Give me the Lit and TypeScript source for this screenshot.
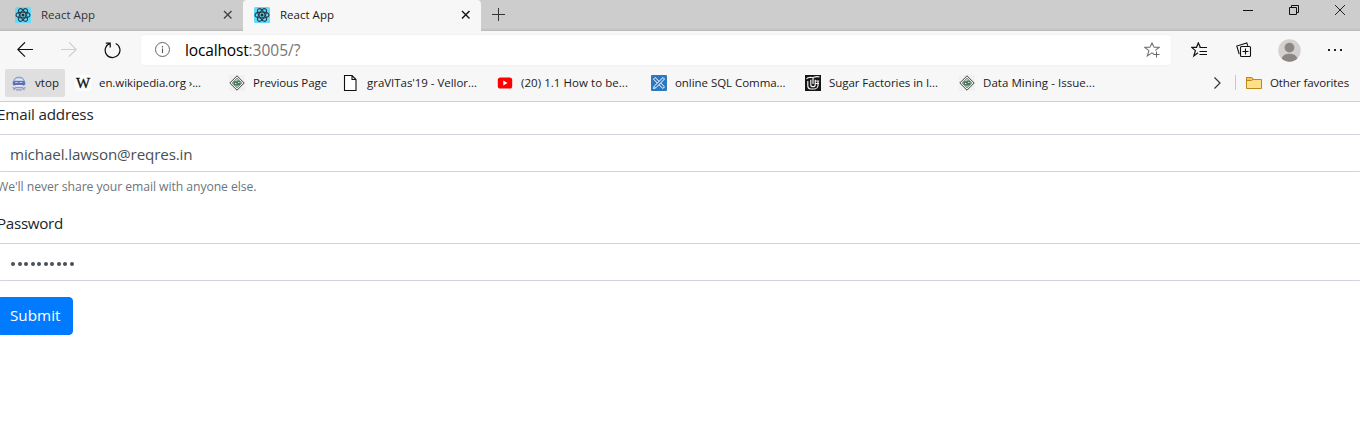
import { LitElement, html, svg, css } from "lit";
import { customElement, property } from "lit/decorators.js";
import { classMap } from "lit/directives/class-map.js";

/** One line of text whose tracking is adjusted so that it spans a given width. */
@customElement("fit-text")
class FitText extends LitElement {
  @property() text = "";
  @property({ type: Number }) w = 0;
  static styles = css`
    :host { display: block; white-space: pre; }
    .t { display: inline-block; }
  `;
  firstUpdated() {
    const t = this.renderRoot.querySelector(".t") as HTMLElement;
    const natural = t.getBoundingClientRect().width;
    t.style.letterSpacing = (this.w - natural) / this.text.length + "px";
  }
  render() {
    return html`<span class="t">${this.text}</span>`;
  }
}

const fit = (text: string, w: number) => html`<fit-text .text=${text} .w=${w}></fit-text>`;

const icon = (body: unknown, size = 16) =>
  html`<svg width=${size} height=${size} viewBox="0 0 ${size} ${size}" fill="none">${body}</svg>`;

const react = icon(svg`
  <rect width="16" height="16" rx="1.5" fill="#61dafb"/>
  <g stroke="#2b3f48" stroke-width="1.15">
    <ellipse cx="8" cy="8" rx="7" ry="2.9"/>
    <ellipse cx="8" cy="8" rx="7" ry="2.9" transform="rotate(60 8 8)"/>
    <ellipse cx="8" cy="8" rx="7" ry="2.9" transform="rotate(120 8 8)"/>
  </g><circle cx="8" cy="8" r="1.5" fill="#20323a"/>`);
const close = (c: string) => icon(svg`<path d="M4 4l7.500 7.500M11.500 4L4 11.500" stroke=${c} stroke-width="1.4"/>`);
const plus = icon(svg`<path d="M8.5 2v13M2 8.5h13" stroke="#333" stroke-width="1"/>`);
const back = icon(svg`<path d="M.8 7.5H16M8 .3L.8 7.5 8 14.7" stroke="#111" stroke-width="1.2"/>`);
const forward = icon(svg`<path d="M0 7.5h15.2M8 .3l7.2 7.2L8 14.7" stroke="#cfcfcf" stroke-width="1.2"/>`);
const reload = icon(svg`<path d="M11.7 1.5A7.4 7.4 0 1 1 5.9 1.3M1.8 1.1h4.4v4.5" stroke="#111" stroke-width="1.25"/>`, 17);
const info = icon(svg`<circle cx="7.500" cy="7.500" r="7" stroke="#666"/><path d="M7.500 6.500v4.600M7.500 4v1.500" stroke="#555" stroke-width="1.1"/>`);
const starAdd = icon(svg`
  <path d="M9.800 12L8 10.900 3.300 14l1.600-5.400L.9 5.400l5-.1L8 .9l2.100 4.400 5 .1-3.800 3" stroke="#777" stroke-width="1.100"/>
  <path d="M12.500 9.500v6M9.500 12.500h6" stroke="#666"/>`);
const starList = icon(svg`
  <path d="M7 10.800L2.800 14l1.600-5.400L.7 5.400l4.800-.1L7.300.9l2 4.400" stroke="#111" stroke-width="1.200"/>
  <path d="M8.500 5.500H16M8.500 9.500H16M8.500 12.500H16" stroke="#111" stroke-width="1.100"/>`);
const collections = icon(svg`
  <path d="M3.200 12.200L.8 4 10.800.9l1 3" stroke="#111" stroke-width="1.100"/>
  <rect x="4.500" y="4.500" width="10" height="10" rx="1" stroke="#111" stroke-width="1.100" fill="#f7f7f7"/>
  <path d="M9.500 6.500v6M6.500 9.500h6" stroke="#111" stroke-width="1.100"/>`);
const avatar = icon(svg`
  <circle cx="11.5" cy="11.5" r="11.2" fill="#d3d0cd"/><circle cx="11.5" cy="8.6" r="4.9" fill="#8c8784"/>
  <path d="M3.7 19.5C4.7 16.1 8 14.8 11.5 14.8s6.8 1.3 7.8 4.7A11.2 11.2 0 0 1 3.7 19.5z" fill="#8c8784"/>`, 23);
const dots = icon(svg`<path d="M1 8h2M7 8h2M13 8h2" stroke="#222" stroke-width="2"/>`);
const minimize = icon(svg`<path d="M3 8.5h10" stroke="#111"/>`);
const restore = icon(svg`<path d="M3.5 5.5h7v7h-7zM5.5 5.5v-2h7v7h-2" stroke="#111"/>`);
const shut = icon(svg`<path d="M3 3l10 10M13 3L3 13" stroke="#222"/>`);
const chevron = icon(svg`<path d="M4.500 2.500L10 8l-5.500 5.500" stroke="#333" stroke-width="1.200"/>`);
const folder = icon(svg`
  <path d="M.5 13.500v-11h5l1.500 2h8.500v9z" fill="#ffe08a" stroke="#b98a17"/><path d="M.5 5.500h5L7 4.500V3.500L5.500 2.500h-5z" fill="#f5c84c" stroke="#b98a17"/>`);

const vtop = icon(svg`
  <path d="M2 9a6 6.800 0 1 1 12 0z" fill="#c3cce6" stroke="#8fa0cf" stroke-width="1.200"/>
  <path d="M4.500 4.500h7" stroke="#e3e8f5" stroke-width="1.200"/>
  <rect x="2" y="6" width="12" height="4.500" rx="1.500" fill="#5a70b4"/>
  <path d="M4 7.500h3M8.500 7.500h3" stroke="#b9c5e6"/>
  <path d="M4 10h8l-1.500 2h-5z" fill="#eef1f8"/>
  <path d="M2.500 15l2.500-2.500h6l2.500 2.500M1.500 12.500l2 .8M14.500 12.500l-2 .8M5 14.800h6" stroke="#8b9ccb" stroke-width="1.300"/>`);
const wiki = html`<span class="wiki">W</span>`;
const diamond = icon(svg`
  <rect width="16" height="16" fill="#f1f1f1"/>
  <path d="M8 .8L15.200 8 8 15.200.8 8z" fill="#eef2ef" stroke="#484848"/>
  <path d="M8 3L13 8l-5 5-5-5z" fill="#b4c6bb" stroke="#77857c" stroke-width=".8"/>
  <path d="M4.500 6.500c1-1 2 .5 3.500-.5s2 0 3.500.5v3c-1.500 1.500-5.500 1.500-7 0z" fill="#477a60"/>
  <path d="M6 8.500h1.500M9 7.500h1.500" stroke="#dbe9e0"/>`);
const page = icon(svg`<path d="M1.500.5h7.500l4 4v11H1.500zM9 .5v4h4" fill="#fff" stroke="#111" stroke-width="1.100"/>`);
const youtube = icon(svg`<rect x=".8" y="2.500" width="14.400" height="11" rx="2.600" fill="#f00"/><path d="M6.300 5.600v4.800L10.500 8z" fill="#fff"/>`);
const sql = icon(svg`
  <rect width="16" height="16" rx="1" fill="#2b79c2"/>
  <path d="M4.200 2.500l9.300 9.300-1.700 1.700-9.300-9.300z" stroke="#fff"/>
  <path d="M12 2.500l1.500 1.500L5 12.700l-2.500.8.700-2.300z" fill="#2b79c2" stroke="#fff"/>`);
const tuf = icon(svg`
  <rect width="16" height="16" fill="#151515"/>
  <path d="M1.500 4C3 1.800 4.800 2.500 7 2.500h1q4-1.500 6.500-.5M2.800 6v5q0 2.500 2.700 3M5.800 4.800V10q0 1.700 2.200 1.700t2.200-1.700V4.800M8 3v6M10.200 6h4M10.500 8.500h3.500M13 6v5q-.5 2.500-3 3M5.500 14h5" stroke="#f3f3f3" stroke-width="1.200"/>`);

interface Bookmark { label: string; textWidth: number; art: unknown; kind: string; }
const bookmarks: Bookmark[] = [
  { label: "vtop", textWidth: 24, art: vtop, kind: "hot" },
  { label: "en.wikipedia.org ›...", textWidth: 102, art: wiki, kind: "wide" },
  { label: "Previous Page", textWidth: 74, art: diamond, kind: "mid" },
  { label: "graVITas'19 - Vellor...", textWidth: 110, art: page, kind: "wide" },
  { label: "(20) 1.1 How to be...", textWidth: 107, art: youtube, kind: "wide" },
  { label: "online SQL Comma...", textWidth: 110.5, art: sql, kind: "wide" },
  { label: "Sugar Factories in I...", textWidth: 109, art: tuf, kind: "wide" },
  { label: "Data Mining - Issue...", textWidth: 112, art: diamond, kind: "wide" },
];

@customElement("app-root")
class AppRoot extends LitElement {
  static styles = css`
    :host { display: block; width: 1360px; height: 442px; overflow: hidden; background: #fff;
      font-family: "Open Sans", "Noto Sans", sans-serif; font-size: 11.5px; color: #1a1a1a; }
    * { box-sizing: border-box; }
    svg { display: block; flex: none; }
    .strip { display: flex; height: 31px; background: linear-gradient(#cdcdcd 28px, #b9b9b9 31px); overflow: hidden; }
    .tab { display: flex; align-items: center; height: 31px; padding: 0 7px 1px 15px; gap: 10px; width: 243px; color: #333; }
    .tab fit-text { margin-top: -2px; }
    .tab.active { width: 238px; padding: 0 7px 1px 11px; background: #f7f7f7; border-radius: 4px 4px 0 0; color: #1a1a1a; }
    .grow { flex: 1; }
    .add { padding: 6px 9px; }
    .controls { display: flex; margin-right: -3px; }
    .control { width: 46px; padding: 2px 15px; }
    .nav { display: flex; align-items: center; height: 38px; background: #f7f7f7; padding-left: 17px; overflow: hidden; }
    .arrows { display: flex; flex: none; align-items: center; gap: 28px; width: 124px; }
    .arrows svg:last-child { margin-left: -1px; }
    .box { display: flex; flex: none; align-items: center; width: 1030px; height: 30px; padding: 0 11px 0 14px; border-radius: 4px; background: #fff; box-shadow: 0 0 2px #e8e8e8; }
    .url { display: flex; margin-left: 14px; font-size: 15.5px; line-height: 28px; color: #000; }
    .rest { color: #767676; }
    .tools { display: grid; flex: none; grid-template-columns: 45px 45px 46px 46px; justify-items: center; align-items: center; margin-left: 5px; height: 30px; }
    .bar { display: flex; align-items: center; gap: 4px; height: 33px; padding: 0 11px 5px 5px; background: #f7f7f7; border-bottom: 1px solid #cfcfcf; }
    .mark { display: flex; align-items: center; gap: 8px; height: 28px; padding: 0 6px; width: 150px; border-radius: 2px; flex: none; }
    .mark.hot { width: 60px; background: #dfdfdf; }
    .mark.mid { width: 110px; }
    .wiki { width: 16px; height: 16px; flex: none; border-radius: 3px; background: #fff; font: 400 15px/17px "Liberation Serif", serif; -webkit-text-stroke: .3px #111; text-align: center; color: #111; }
    .rule { width: 1px; height: 15px; background: #c8c8c8; margin: 0 6px 0 5px; }
    .folder { display: flex; align-items: center; gap: 8px; width: 103px; }
    .form { margin: 0 -3px; font-size: 15.2px; line-height: 24px; color: #212529; }
    .label { height: 24px; margin-bottom: 8px; }
    .input { height: 38px; padding: 7px 12px 5px; border: 1px solid #ced4da; border-radius: 4px; color: #495057; }
    .hint { height: 19px; margin: 4px 0 16px; font-size: 12.2px; line-height: 21px; color: #6c757d; }
    .secret { display: flex; align-items: center; height: 24px; gap: 2.5px; padding: 2px 0 0 1px; }
    .dot { width: 4px; height: 4px; border-radius: 50%; background: #495057; }
    .submit { display: block; width: 76px; height: 38px; margin-top: 16px; padding: 5px 12px 7px; border: 1px solid #007bff; border-radius: 4px; background: #007bff; color: #fff; font: inherit; line-height: 24px; text-align: left; }
  `;

  private tab(active: boolean) {
    return html`<div class=${classMap({ tab: true, active })}>
      ${react}${fit("React App", 54)}<span class="grow"></span>${close(active ? "#111" : "#444")}
    </div>`;
  }

  render() {
    return html`
      <div class="strip">
        ${this.tab(false)}${this.tab(true)}
        <div class="add">${plus}</div>
        <span class="grow"></span>
        <div class="controls">
          ${[minimize, restore, shut].map((c) => html`<div class="control">${c}</div>`)}
        </div>
      </div>
      <div class="nav">
        <div class="arrows">${back}${forward}${reload}</div>
        <div class="box">
          ${info}
          <div class="url">${fit("localhost", 63.5)}<span class="rest">${fit(":3005/?", 52)}</span></div>
          <span class="grow"></span>${starAdd}
        </div>
        <div class="tools">${starList}${collections}${avatar}${dots}</div>
      </div>
      <div class="bar">
        ${bookmarks.map((b) => html`<div class="mark ${b.kind}">${b.art}${fit(b.label, b.textWidth)}</div>`)}
        <span class="grow"></span>
        ${chevron}<span class="rule"></span>
        <div class="folder">${folder}${fit("Other favorites", 79)}</div>
      </div>
      <form class="form">
        <div class="label">${fit("Email address", 96.5)}</div>
        <div class="input">${fit("michael.lawson@reqres.in", 182.5)}</div>
        <div class="hint">${fit("We'll never share your email with anyone else.", 259.5)}</div>
        <div class="label">${fit("Password", 66)}</div>
        <div class="input"><div class="secret">${Array.from({ length: 10 }, () => html`<span class="dot"></span>`)}</div></div>
        <button class="submit" type="button">${fit("Submit", 50.5)}</button>
      </form>
    `;
  }
}
